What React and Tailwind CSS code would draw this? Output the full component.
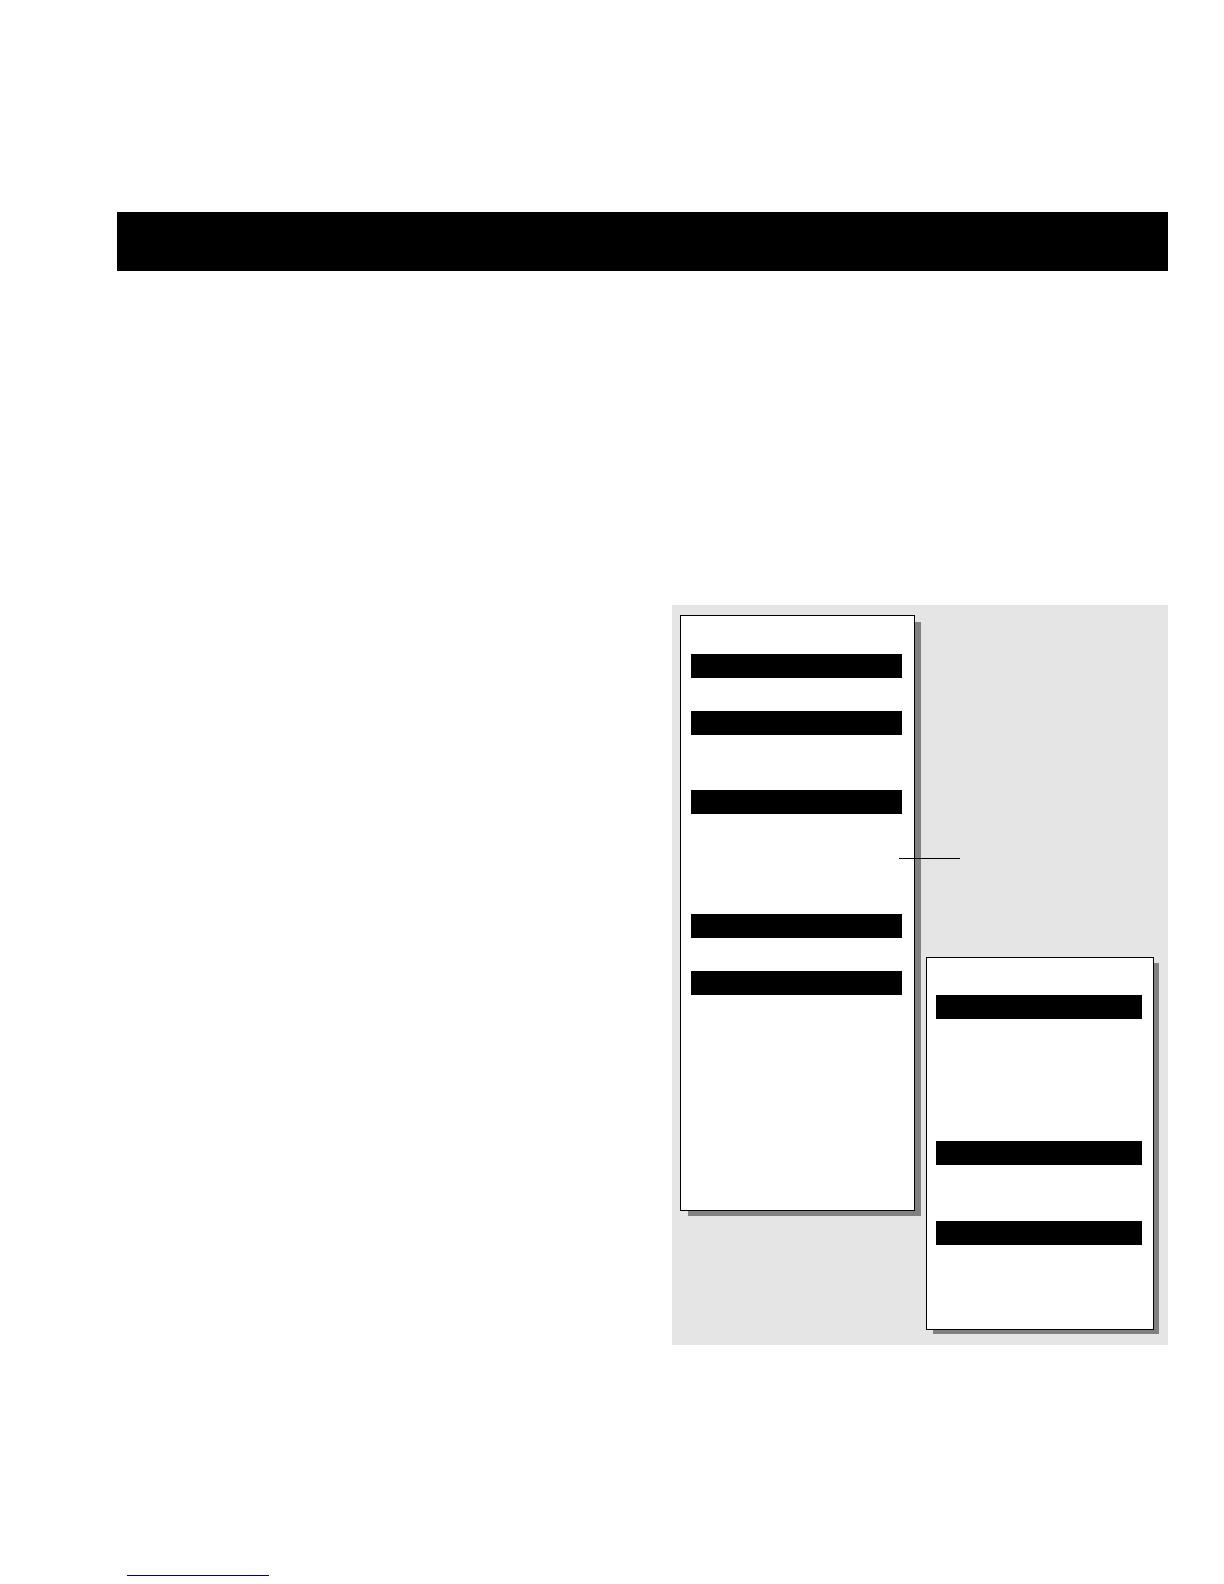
// src/App.jsx

const menuSections = [
  { id: "first", body: "h-[33px]" },
  { id: "second", body: "h-[55px]" },
  { id: "third", body: "h-[100px]", callout: true },
  { id: "fourth", body: "h-[33px]" },
  { id: "fifth", body: "h-[215px]" },
];

const detailSections = [
  { id: "first", body: "h-[122px]" },
  { id: "second", body: "h-14" },
  { id: "third", body: "h-[84px]" },
];

function Sections({ items }) {
  return items.map((item) => (
    <section key={item.id} className="relative">
      <div className="h-6 bg-black" />
      <div className={item.body} />
      {/* leader line that runs out over the panel edge */}
      {item.callout && (
        <div className="absolute top-[68px] -right-[58px] h-px w-[61px] bg-black" />
      )}
    </section>
  ));
}

export default function App() {
  return (
    <main className="min-h-screen bg-white pt-[212px] pr-14 pb-2 pl-[117px] font-['Liberation_Sans',sans-serif]">
      <header className="h-[59px] bg-black" />

      <figure className="mt-[334px] ml-auto flex max-w-[496px] items-start gap-[11px] bg-[#e5e5e5] pt-2.5 pr-3.5 pb-[15px] pl-2">
        <div className="relative z-10 w-[235px] shrink-0 border border-black bg-white pt-[38px] pr-3 pl-2.5 shadow-[7px_6px_0_-1px_#808080]">
          <Sections items={menuSections} />
        </div>
        <div className="mt-[342px] min-w-0 flex-1 border border-black bg-white pt-[37px] pr-[11px] pl-[9px] shadow-[6px_5px_0_-1px_#808080]">
          <Sections items={detailSections} />
        </div>
      </figure>

      <hr className="mt-[230px] ml-2.5 w-[142px] border-t border-[#00008b]" />
    </main>
  );
}
